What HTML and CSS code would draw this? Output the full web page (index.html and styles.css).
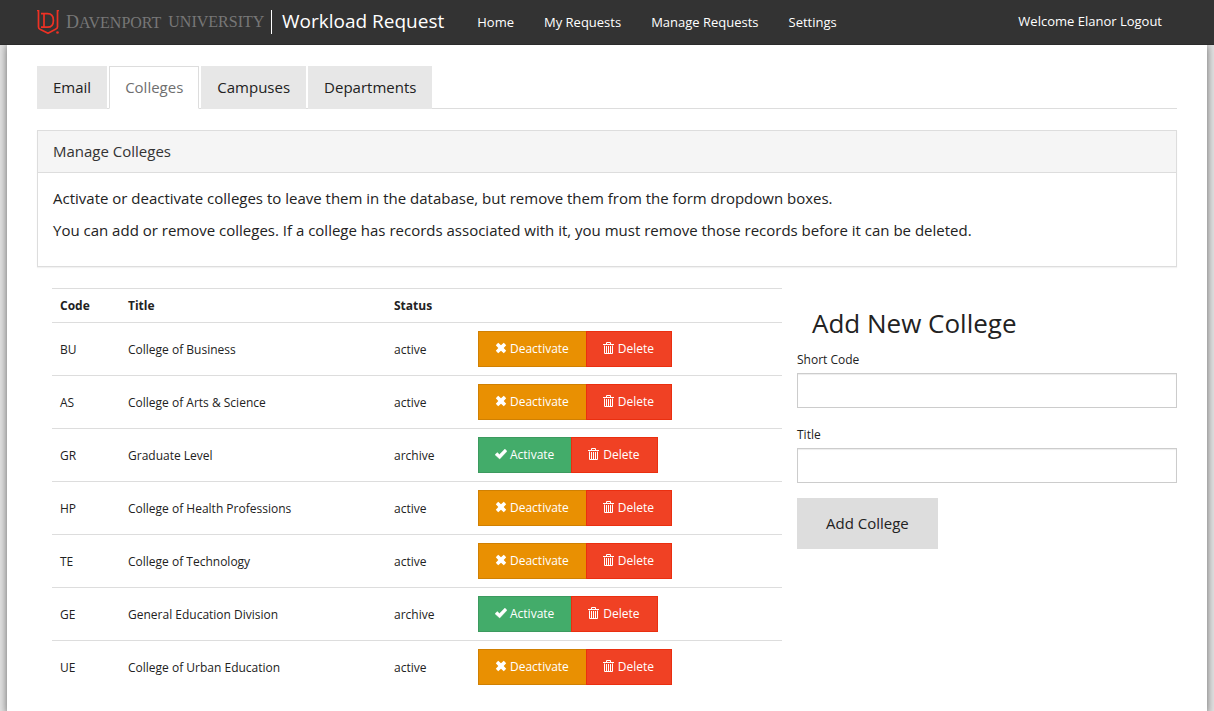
FILE: index.html
```html
<!DOCTYPE html>
<html lang="en">
<head>
<meta charset="utf-8">
<meta name="viewport" content="width=device-width, initial-scale=1">
<title>Workload Request</title>
<link rel="stylesheet" href="styles.css">
</head>
<body>
<svg class="sprite" aria-hidden="true">
  <symbol id="remove" viewBox="0 0 12 12"><path d="M3.200 .8 6 3.300 8.800 .8 11.200 3.200 8.700 6 11.200 8.800 8.800 11.200 6 8.700 3.200 11.200 .8 8.800 3.300 6 .8 3.200z" fill="currentColor"/></symbol>
  <symbol id="ok" viewBox="0 0 12 12"><path d="M0 6.800 2.200 4.500 4.500 6.500 9.900 1 12 3.200 4.700 11z" fill="currentColor" stroke="currentColor" stroke-width=".4"/></symbol>
  <symbol id="trash" viewBox="0 0 12 14"><path d="M0 3.500h11M3.500 3V1.500h4V3M1.500 4.500V12.500h8V4.500M3.500 5v7M5.500 5v7M7.500 5v7" fill="none" stroke="currentColor"/></symbol>
</svg>
<header class="navbar">
  <a class="logo" href="#" aria-label="Davenport University">
    <svg class="shield" viewBox="0 0 24 24" aria-hidden="true">
      <path d="M0 .5H1.500V17Q1.500 18.500 3 19.300L11 23.200 18.500 19.300Q20.500 18.500 20.500 17V.5H22" fill="none" stroke="#ee3124" stroke-width="1.700"/>
      <path d="M4 3.700H10.500Q16.400 3.700 16.400 10.400T10.500 17.200H4M7 3.700V17.200" fill="none" stroke="#ee3124" stroke-width="1.700"/>
      <circle cx="20.500" cy="22.500" r="1.300" fill="#ee3124"/>
    </svg>
    <span class="wordmark"><span><span class="initial">D</span>AVENPORT</span> <span>UNIVERSITY</span></span>
  </a>
  <a class="brand" href="#">Workload Request</a>
  <nav class="menu">
    <a href="#">Home</a>
    <a href="#">My Requests</a>
    <a href="#">Manage Requests</a>
    <a href="#">Settings</a>
  </nav>
  <div class="user">Welcome Elanor <a href="#">Logout</a></div>
</header>
<main class="page">
  <nav class="tabs">
    <a class="tab" href="#">Email</a>
    <a class="tab active" href="#" aria-current="page">Colleges</a>
    <a class="tab" href="#">Campuses</a>
    <a class="tab" href="#">Departments</a>
  </nav>
  <section class="panel">
    <h1 class="panel-heading">Manage Colleges</h1>
    <div class="panel-body">
      <p>Activate or deactivate colleges to leave them in the database, but remove them from the form dropdown boxes.</p>
      <p>You can add or remove colleges. If a college has records associated with it, you must remove those records before it can be deleted.</p>
    </div>
  </section>
  <div class="row">
    <div class="list">
      <table class="table">
        <thead><tr><th class="code">Code</th><th class="title">Title</th><th class="status">Status</th><th></th></tr></thead>
        <tbody>
          <tr><td>BU</td><td>College of Business</td><td>active</td><td><div class="actions"><button class="btn warning"><svg class="icon"><use href="#remove"/></svg>Deactivate</button><button class="btn danger"><svg class="icon trash"><use href="#trash"/></svg>Delete</button></div></td></tr>
          <tr><td>AS</td><td>College of Arts &amp; Science</td><td>active</td><td><div class="actions"><button class="btn warning"><svg class="icon"><use href="#remove"/></svg>Deactivate</button><button class="btn danger"><svg class="icon trash"><use href="#trash"/></svg>Delete</button></div></td></tr>
          <tr><td>GR</td><td>Graduate Level</td><td>archive</td><td><div class="actions"><button class="btn success"><svg class="icon"><use href="#ok"/></svg>Activate</button><button class="btn danger"><svg class="icon trash"><use href="#trash"/></svg>Delete</button></div></td></tr>
          <tr><td>HP</td><td>College of Health Professions</td><td>active</td><td><div class="actions"><button class="btn warning"><svg class="icon"><use href="#remove"/></svg>Deactivate</button><button class="btn danger"><svg class="icon trash"><use href="#trash"/></svg>Delete</button></div></td></tr>
          <tr><td>TE</td><td>College of Technology</td><td>active</td><td><div class="actions"><button class="btn warning"><svg class="icon"><use href="#remove"/></svg>Deactivate</button><button class="btn danger"><svg class="icon trash"><use href="#trash"/></svg>Delete</button></div></td></tr>
          <tr><td>GE</td><td>General Education Division</td><td>archive</td><td><div class="actions"><button class="btn success"><svg class="icon"><use href="#ok"/></svg>Activate</button><button class="btn danger"><svg class="icon trash"><use href="#trash"/></svg>Delete</button></div></td></tr>
          <tr><td>UE</td><td>College of Urban Education</td><td>active</td><td><div class="actions"><button class="btn warning"><svg class="icon"><use href="#remove"/></svg>Deactivate</button><button class="btn danger"><svg class="icon trash"><use href="#trash"/></svg>Delete</button></div></td></tr>
        </tbody>
      </table>
    </div>
    <form class="add-form">
      <h2>Add New College</h2>
      <label for="short-code">Short Code</label>
      <input id="short-code" type="text">
      <label for="college-title">Title</label>
      <input id="college-title" type="text">
      <button class="submit" type="button">Add College</button>
    </form>
  </div>
</main>
</body>
</html>
```
FILE: styles.css
```css
* { box-sizing: border-box; }
body {
  margin: 0;
  min-height: 100vh;
  display: flex;
  flex-direction: column;
  background: #e2e2e2;
  color: #222;
  font: 15px/21px "Open Sans", sans-serif;
}
a { color: inherit; text-decoration: none; }
.sprite { position: absolute; width: 0; height: 0; }

.navbar {
  position: relative;
  z-index: 1;
  display: flex;
  align-items: center;
  height: 45px;
  padding: 0 37px;
  background: #333;
  border-bottom: 1px solid #2b2b2b;
  color: #fff;
  font-size: 13px;
  white-space: nowrap;
}
.logo {
  display: flex;
  align-items: center;
  gap: 5px;
  width: 235px;
  height: 24px;
  border-right: 1px solid #fff;
}
.shield { width: 24px; height: 24px; flex: none; }
.wordmark { display: flex; gap: 7px; color: #777; font: 16px/24px "Liberation Serif", serif; }
.initial { font-size: 18px; }
.brand { margin-left: 10px; padding-bottom: 2px; font-size: 19px; }
.menu { display: flex; gap: 30px; margin-left: 33px; }
.user { margin-left: auto; margin-right: 15px; padding-bottom: 2px; }

.page {
  flex: 1;
  margin: 0 7px;
  padding: 21px 30px;
  background: #fff;
  box-shadow: 0 0 8px #666;
}
.tabs { display: flex; gap: 2px; border-bottom: 1px solid #ddd; }
.tab {
  margin-bottom: -1px;
  padding: 10px 15px;
  border: 1px solid #e7e7e7;
  background: #e7e7e7;
}
.tab.active {
  border-color: #ddd #ddd #fff;
  background: #fff;
  color: #6f6f6f;
}

.panel { margin: 21px 0; border: 1px solid #ddd; box-shadow: 0 1px 1px rgba(0, 0, 0, .05); }
.panel-heading {
  margin: 0;
  padding: 10px 15px;
  border-bottom: 1px solid #ddd;
  background: #f5f5f5;
  color: #333;
  font-size: 15px;
  font-weight: 400;
}
.panel-body { padding: 15px 15px 14px; }
.panel-body p { margin: 0 0 11px; }

.row { display: grid; grid-template-columns: 2fr 1fr; align-items: start; }
.list { padding: 0 15px; }
.table {
  width: 100%;
  border-collapse: separate;
  border-spacing: 0;
  table-layout: fixed;
  font-size: 12px;
  line-height: 17px;
}
.table th, .table td { padding: 8px; border-top: 1px solid #ddd; text-align: left; }
.code { width: 68px; }
.title { width: 266px; }
.status { width: 84px; }
.actions { display: flex; }
.btn {
  display: flex;
  align-items: center;
  gap: 3px;
  height: 36px;
  padding: 0 17px 2px 16px;
  border: 1px solid;
  color: #fff;
  font: inherit;
}
.btn + .btn { margin-left: -1px; }
.icon { width: 12px; height: 12px; flex: none; }
.icon.trash { height: 14px; }
.warning { background: #e99002; border-color: #d08002; }
.success { background: #43ac6a; border-color: #3c9a5f; }
.danger { background: #f04124; border-color: #ea2f10; }

.add-form { display: flex; flex-direction: column; font-size: 12px; }
.add-form h2 { margin: 21px 15px 10px; font-size: 26px; line-height: 29px; font-weight: 400; }
.add-form label { margin-bottom: 2px; line-height: 23px; }
.add-form input {
  width: 100%;
  height: 35px;
  margin-bottom: 15px;
  padding: 6px 12px;
  border: 1px solid #ccc;
  box-shadow: inset 0 1px 1px rgba(0, 0, 0, .075);
  font: inherit;
}
.submit {
  align-self: flex-start;
  padding: 15px 29px;
  border: 0;
  background: #ddd;
  color: #222;
  font: 15px/21px "Open Sans", sans-serif;
}
```
